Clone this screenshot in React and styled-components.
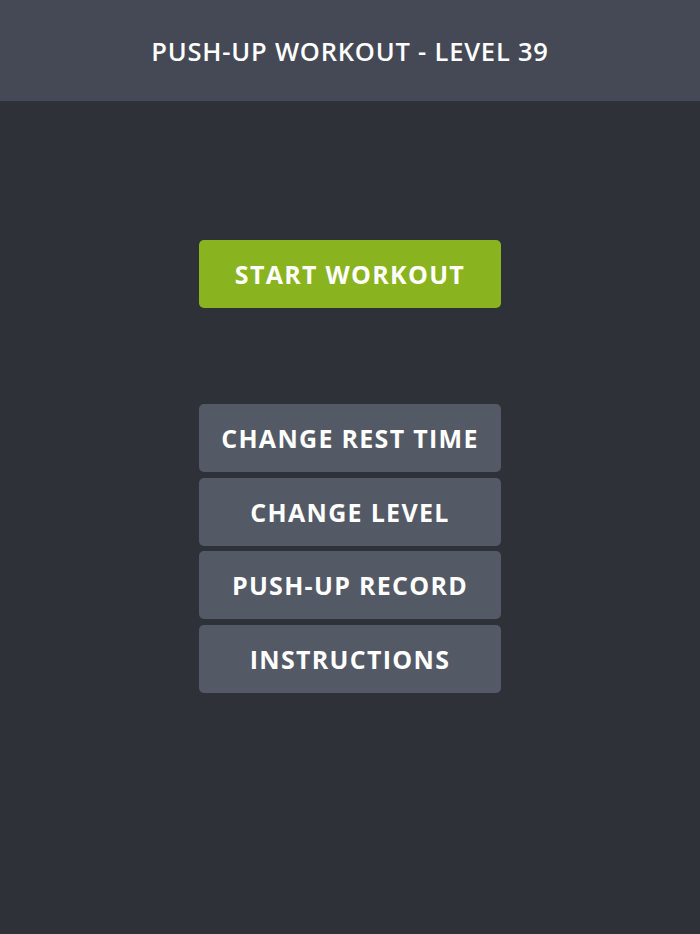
import React from 'react';
import styled, { createGlobalStyle } from 'styled-components';

const GlobalStyle = createGlobalStyle`
  html, body {
    margin: 0;
    padding: 0;
    background: #2f3139;
    font-family: "Open Sans", "Liberation Sans", sans-serif;
  }
`;

const Screen = styled.div`
  width: 700px;
  height: 934px;
  background: #2f3139;
  display: flex;
  flex-direction: column;
`;

const Header = styled.header`
  height: 101px;
  background: #454955;
  display: flex;
  align-items: center;
  justify-content: center;
  color: #fff;
  font-size: 25.5px;
  font-weight: 600;
  letter-spacing: 0.8px;
`;

const Menu = styled.main`
  display: flex;
  flex-direction: column;
  align-items: center;
  padding-top: 139px;
`;

const Button = styled.button`
  width: 302px;
  height: 68px;
  margin-bottom: ${p => p.gap || 5.5}px;
  border: none;
  border-radius: 5px;
  background: ${p => (p.primary ? '#8ab320' : '#545966')};
  color: #fff;
  font-family: inherit;
  font-size: 25px;
  font-weight: 700;
  letter-spacing: 1.3px;
  text-transform: uppercase;
  cursor: pointer;
`;

const items = ['Change Rest Time', 'Change Level', 'Push-up Record', 'Instructions'];

export default function App() {
  return (
    <Screen>
      <GlobalStyle />
      <Header>PUSH-UP WORKOUT - LEVEL 39</Header>
      <Menu>
        <Button primary gap={96}>Start Workout</Button>
        {items.map(label => (
          <Button key={label}>{label}</Button>
        ))}
      </Menu>
    </Screen>
  );
}
